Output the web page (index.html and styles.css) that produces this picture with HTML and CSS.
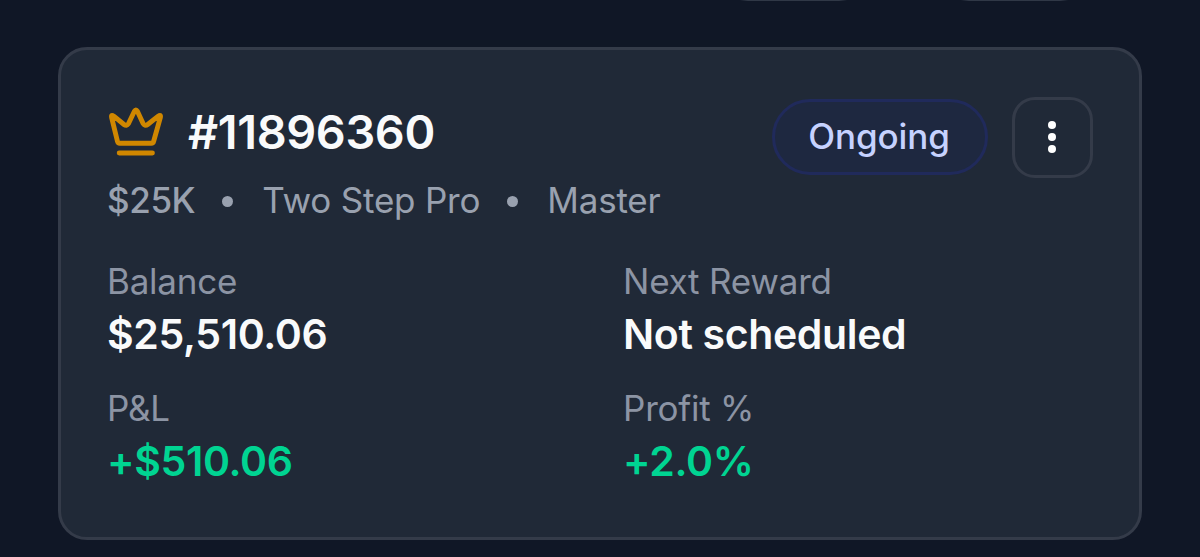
FILE: index.html
```html
<!DOCTYPE html>
<html lang="en">
<head>
<meta charset="utf-8">
<title>Account</title>
<link rel="stylesheet" href="styles.css">
</head>
<body>
<div class="toolbar"><span class="tool-edge"></span><span class="tool-edge"></span></div>
<main class="card">
  <header class="head">
    <div class="account">
      <svg class="crown" viewBox="0 0 58 54" fill="none" stroke="currentColor" stroke-width="4.9" stroke-linecap="round" stroke-linejoin="round"><path d="M6.8 12.2Q4 10.2 4.6 13.4L10.5 37.5Q10.9 39.3 12.8 39.3H44.3Q46.2 39.3 46.6 37.5L53.4 13.4Q54 10.2 51.2 12.2L40.7 20.5Q38 22.6 36.2 19.8L30.4 7.2Q28.9 4.6 27.4 7.2L21.4 19.8Q19.6 22.6 17 20.5Z"/><path d="M12.2 49H45.4"/></svg>
      <h1 class="number">#11896360</h1>
    </div>
    <div class="actions">
      <span class="badge">Ongoing</span>
      <button class="more" aria-label="More"><i></i><i></i><i></i></button>
    </div>
  </header>
  <div class="meta"><span class="size">$25K</span><i class="dot"></i><span class="plan">Two Step Pro</span><i class="dot"></i><span class="stage">Master</span></div>
  <dl class="stats">
    <div><dt>Balance</dt><dd>$25,510.06</dd></div>
    <div><dt>Next Reward</dt><dd>Not scheduled</dd></div>
    <div><dt>P&amp;L</dt><dd class="gain">+$510.06</dd></div>
    <div><dt>Profit %</dt><dd class="gain">+2.0%</dd></div>
  </dl>
</main>
</body>
</html>
```
FILE: styles.css
```css
* { box-sizing: border-box; }
body {
  margin: 0;
  height: 557px;
  overflow: hidden;
  background: #101726;
  font-family: Inter, sans-serif;
  color: #f9fafb;
}
.toolbar {
  display: flex;
  gap: 114px;
  height: 47px;
  padding-left: 740px;
}
.tool-edge {
  width: 107px;
  height: 1px;
  background: linear-gradient(90deg, transparent, #303846 8px, #303846 99px, transparent);
}
.card {
  width: 1084px;
  height: 493px;
  margin-left: 58px;
  padding: 46px 46px 0 46px;
  background: #202937;
  border: 3px solid #343b49;
  border-radius: 29px;
}
.head { display: flex; justify-content: space-between; height: 81px; }
.account { display: flex; align-items: center; height: 71px; }
.crown { width: 58px; height: 54px; margin: -1px 23px 0 0; color: #d08700; }
.number { margin: 0; font-size: 46.8px; font-weight: 600; line-height: 70px; letter-spacing: -0.35px; }
.actions { display: flex; align-items: center; gap: 24px; height: 82px; }
.badge {
  width: 216px;
  height: 76px;
  line-height: 68px;
  text-align: center;
  font-size: 35px;
  font-weight: 500;
  letter-spacing: -0.1px;
  color: #c6d2ff;
  background: #1e2840;
  border: 3px solid #202a5b;
  border-radius: 38px;
  padding-right: 2px;
}
.more {
  display: flex;
  flex-direction: column;
  align-items: center;
  justify-content: center;
  gap: 4px;
  width: 81px;
  height: 81px;
  padding: 0 1px 1px 0;
  background: transparent;
  border: 3px solid #343b49;
  border-radius: 23px;
}
.more i { width: 8px; height: 8px; border-radius: 50%; background: #fff; }
.meta {
  display: flex;
  align-items: center;
  height: 46px;
  font-size: 35px;
  line-height: 46px;
  letter-spacing: -0.2px;
  color: #99a1af;
}
.size { font-weight: 500; letter-spacing: -0.4px; }
.dot { width: 11px; height: 11px; margin: 3px 29px 0 27px; border-radius: 50%; background: #99a1af; }
.stats {
  display: grid;
  grid-template-columns: 1fr 1fr;
  column-gap: 46px;
  row-gap: 22px;
  margin: 35px 0 0;
}
.stats dt { height: 47px; font-size: 35px; line-height: 47px; letter-spacing: -0.22px; color: #8c94a4; }
.stats dd { height: 58px; margin: 0; font-size: 41px; line-height: 58px; font-weight: 600; letter-spacing: -0.35px; }
.stats .gain { color: #00d492; }
```
